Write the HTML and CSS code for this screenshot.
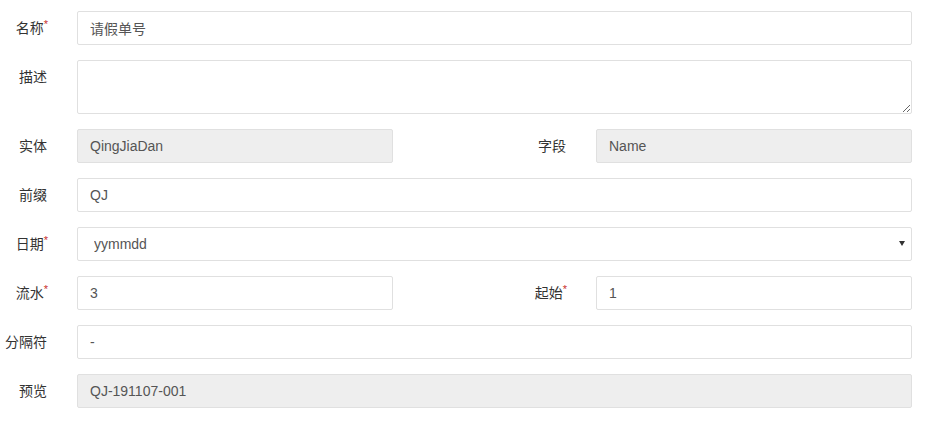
FILE: index.html
```html
<!DOCTYPE html>
<html>
<head>
<meta charset="utf-8">
<link rel="stylesheet" href="styles.css">
</head>
<body>
<form class="form">
  <div class="row">
    <label class="label">名称<sup class="req">*</sup></label>
    <input class="ctl span3" type="text" value="请假单号">
  </div>
  <div class="row">
    <label class="label">描述</label>
    <textarea class="ctl area span3"></textarea>
  </div>
  <div class="row">
    <label class="label">实体</label>
    <input class="ctl" type="text" value="QingJiaDan" disabled>
    <label class="label">字段</label>
    <input class="ctl" type="text" value="Name" disabled>
  </div>
  <div class="row">
    <label class="label">前缀</label>
    <input class="ctl span3" type="text" value="QJ">
  </div>
  <div class="row">
    <label class="label">日期<sup class="req">*</sup></label>
    <div class="select-wrap span3">
      <select class="ctl sel"><option>yymmdd</option></select>
    </div>
  </div>
  <div class="row">
    <label class="label">流水<sup class="req">*</sup></label>
    <input class="ctl" type="text" value="3">
    <label class="label">起始<sup class="req">*</sup></label>
    <input class="ctl" type="text" value="1">
  </div>
  <div class="row">
    <label class="label">分隔符</label>
    <input class="ctl span3" type="text" value="-">
  </div>
  <div class="row">
    <label class="label">预览</label>
    <input class="ctl span3" type="text" value="QJ-191107-001" disabled>
  </div>
</form>
</body>
</html>
```

FILE: styles.css
```css
* { box-sizing: border-box; }
html, body { margin: 0; padding: 0; background: #fff; }
body {
  font-family: "Liberation Sans", "Noto Sans CJK SC", sans-serif;
  font-size: 14px;
  color: #333;
}
.form {
  padding-top: 11px;
  width: 912px;
  display: flex;
  flex-direction: column;
  gap: 15px;
}
.row {
  display: grid;
  grid-template-columns: 77px 316px 203px 316px;
  align-items: start;
}
.label {
  padding: 7px 30px 0 0;
  line-height: 20px;
  text-align: right;
  white-space: nowrap;
  color: #333;
}
.req {
  color: #c9302c;
  font-size: 11px;
  vertical-align: top;
  position: relative;
  top: 1px;
  line-height: 11px;
  margin-right: -1px;
}
.ctl {
  display: block;
  width: 100%;
  height: 34px;
  margin: 0;
  padding: 6px 12px;
  border: 1px solid #e0e0e0;
  border-radius: 2px;
  background: #fff;
  color: #555;
  font-family: "Liberation Sans", "Noto Sans CJK SC", sans-serif;
  font-size: 14px;
  line-height: 20px;
  outline: none;
}
.ctl:disabled {
  background: #eee;
  color: #555;
  -webkit-text-fill-color: #555;
  opacity: 1;
}
.span3 { grid-column: 2 / 5; }
.area {
  height: 54px;
  resize: vertical;
}
.select-wrap { position: relative; }
.sel {
  appearance: none;
  -webkit-appearance: none;
  padding-left: 16px;
}
.select-wrap::after {
  content: "";
  position: absolute;
  right: 7px;
  top: 14px;
  border-left: 3px solid transparent;
  border-right: 3px solid transparent;
  border-top: 5px solid #333;
}
```
